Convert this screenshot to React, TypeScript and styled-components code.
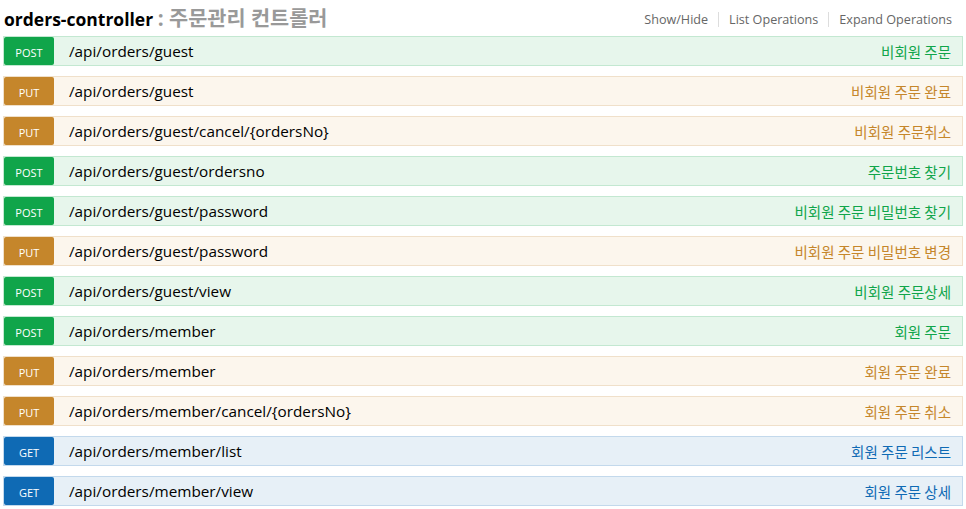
import React from "react";
import styled, { createGlobalStyle } from "styled-components";

const Global = createGlobalStyle`
  html, body { margin: 0; padding: 0; background: #fff; }
  body { font-family: "Open Sans", "Noto Sans CJK KR", sans-serif; }
`;

type Method = "GET" | "POST" | "PUT";

const palette: Record<Method, { main: string; bg: string; border: string }> = {
  GET: { main: "#0f6ab4", bg: "#e7f0f7", border: "#c3d9ec" },
  POST: { main: "#10a54a", bg: "#e7f6ec", border: "#c3e8d1" },
  PUT: { main: "#c5862b", bg: "#fcf6ed", border: "#f0e0ca" },
};

const Wrap = styled.div`
  padding: 0 3px 0 3px;
  width: 960px;
`;

const Header = styled.div`
  display: flex;
  align-items: center;
  justify-content: space-between;
  height: 36px;
  padding-left: 1px;
`;

const Title = styled.h2`
  margin: 0 0 2px 0;
  font-size: 17.5px;
  font-weight: 700;
  color: #000;
  font-family: "Open Sans", "Noto Sans CJK KR", sans-serif;
  span {
    color: #999;
    font-size: 20.8px;
  }
`;

const Links = styled.ul`
  display: flex;
  list-style: none;
  margin: 3px 0 0 0;
  padding: 0 11px 0 0;
  font-size: 12.6px;
  color: #666;
`;

const LinkItem = styled.li<{ $first?: boolean }>`
  padding: 0 10px;
  line-height: 15px;
  border-left: ${(p) => (p.$first ? "none" : "1px solid #ddd")};
  &:last-child { padding-right: 0; }
`;

const List = styled.ul`
  list-style: none;
  margin: 0;
  padding: 0;
  display: flex;
  flex-direction: column;
  gap: 10px;
`;

const Row = styled.li<{ $m: Method }>`
  display: flex;
  align-items: center;
  height: 28px;
  padding: 0;
  border: 1px solid ${(p) => palette[p.$m].border};
  background: ${(p) => palette[p.$m].bg};
`;

const Badge = styled.span<{ $m: Method }>`
  display: flex;
  align-items: center;
  justify-content: center;
  width: 50px;
  height: 28px;
  box-sizing: border-box;
  padding-top: 3px;
  border-radius: 2px;
  background: ${(p) => palette[p.$m].main};
  color: #fff;
  font-size: 11px;
  text-transform: uppercase;
  font-family: "Open Sans", sans-serif;
`;

const Path = styled.span`
  padding-left: 15px;
  font-size: 15.3px;
  color: #000;
  flex: 1;
`;

const Desc = styled.span<{ $m: Method }>`
  padding-right: 11px;
  font-size: 14.5px;
  color: ${(p) => palette[p.$m].main};
  font-family: "Noto Sans CJK KR", sans-serif;
`;

const ops: { m: Method; path: string; desc: string }[] = [
  { m: "POST", path: "/api/orders/guest", desc: "비회원 주문" },
  { m: "PUT", path: "/api/orders/guest", desc: "비회원 주문 완료" },
  { m: "PUT", path: "/api/orders/guest/cancel/{ordersNo}", desc: "비회원 주문취소" },
  { m: "POST", path: "/api/orders/guest/ordersno", desc: "주문번호 찾기" },
  { m: "POST", path: "/api/orders/guest/password", desc: "비회원 주문 비밀번호 찾기" },
  { m: "PUT", path: "/api/orders/guest/password", desc: "비회원 주문 비밀번호 변경" },
  { m: "POST", path: "/api/orders/guest/view", desc: "비회원 주문상세" },
  { m: "POST", path: "/api/orders/member", desc: "회원 주문" },
  { m: "PUT", path: "/api/orders/member", desc: "회원 주문 완료" },
  { m: "PUT", path: "/api/orders/member/cancel/{ordersNo}", desc: "회원 주문 취소" },
  { m: "GET", path: "/api/orders/member/list", desc: "회원 주문 리스트" },
  { m: "GET", path: "/api/orders/member/view", desc: "회원 주문 상세" },
];

export default function App() {
  return (
    <>
      <Global />
      <Wrap>
        <Header>
          <Title>
            orders-controller <span>: 주문관리 컨트롤러</span>
          </Title>
          <Links>
            <LinkItem $first>Show/Hide</LinkItem>
            <LinkItem>List Operations</LinkItem>
            <LinkItem>Expand Operations</LinkItem>
          </Links>
        </Header>
        <List>
          {ops.map((o, i) => (
            <Row key={i} $m={o.m}>
              <Badge $m={o.m}>{o.m}</Badge>
              <Path>{o.path}</Path>
              <Desc $m={o.m}>{o.desc}</Desc>
            </Row>
          ))}
        </List>
      </Wrap>
    </>
  );
}
